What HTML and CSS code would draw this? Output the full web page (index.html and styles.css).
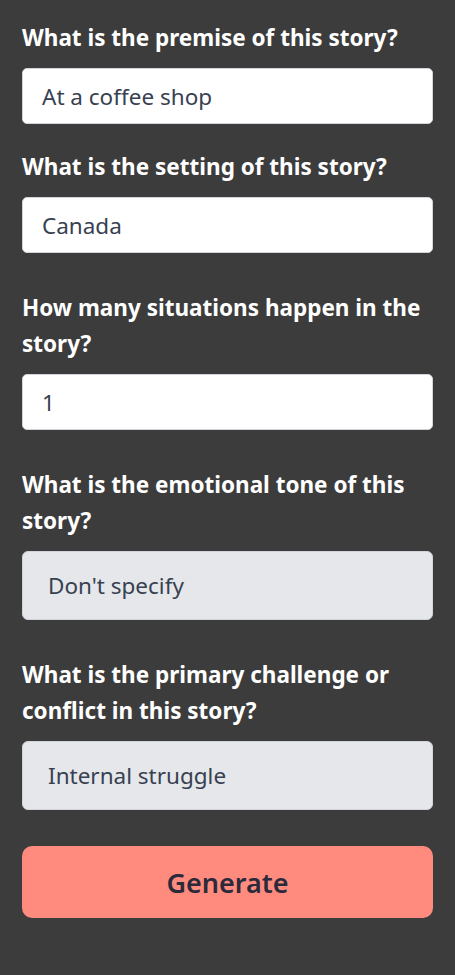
FILE: index.html
```html
<!DOCTYPE html>
<html lang="en">
<head>
<meta charset="utf-8">
<title>Story form</title>
<link rel="stylesheet" href="styles.css">
</head>
<body>
<form class="form">
  <div class="field field-first">
    <label class="label" for="premise">What is the premise of this story?</label>
    <input class="input" id="premise" type="text" value="At a coffee shop">
  </div>
  <div class="field field-second">
    <label class="label" for="setting">What is the setting of this story?</label>
    <input class="input" id="setting" type="text" value="Canada">
  </div>
  <div class="field">
    <label class="label" for="situations">How many situations happen in the story?</label>
    <input class="input" id="situations" type="text" value="1">
  </div>
  <div class="field">
    <label class="label" for="tone">What is the emotional tone of this story?</label>
    <select class="select" id="tone"><option>Don't specify</option></select>
  </div>
  <div class="field">
    <label class="label" for="conflict">What is the primary challenge or conflict in this story?</label>
    <select class="select" id="conflict"><option>Internal struggle</option></select>
  </div>
  <button class="button" type="button">Generate</button>
</form>
</body>
</html>
```

FILE: styles.css
```css
html, body {
  margin: 0;
  padding: 0;
  background: #3c3c3c;
}
body {
  font-family: "Noto Sans", "Open Sans", sans-serif;
}
.form {
  display: flex;
  flex-direction: column;
  padding: 20px 22px 40px 22px;
}
.field {
  display: flex;
  flex-direction: column;
  margin-top: 37px;
}
.field-first {
  margin-top: 0;
}
.field-second {
  margin-top: 25px;
}
.label {
  color: #ffffff;
  font-weight: 700;
  font-size: 22.5px;
  line-height: 36px;
  margin-bottom: 12px;
}
.input {
  box-sizing: border-box;
  height: 56px;
  width: 100%;
  border: 1px solid #d1d5db;
  border-radius: 5px;
  background: #ffffff;
  padding: 0 19px;
  font-family: inherit;
  font-size: 22.5px;
  color: #374151;
  outline: none;
}
.select {
  box-sizing: border-box;
  -webkit-appearance: none;
  appearance: none;
  height: 69px;
  width: 100%;
  border: 1px solid #d1d5db;
  border-radius: 6px;
  background: #e5e7eb;
  padding: 0 25px;
  font-family: inherit;
  font-size: 22.5px;
  color: #374151;
  outline: none;
}
.button {
  margin-top: 36px;
  height: 72px;
  width: 100%;
  border: none;
  border-radius: 10px;
  background: #ff8b7f;
  color: #2b2a3a;
  font-family: inherit;
  font-size: 27px;
  font-weight: 600;
}
```
